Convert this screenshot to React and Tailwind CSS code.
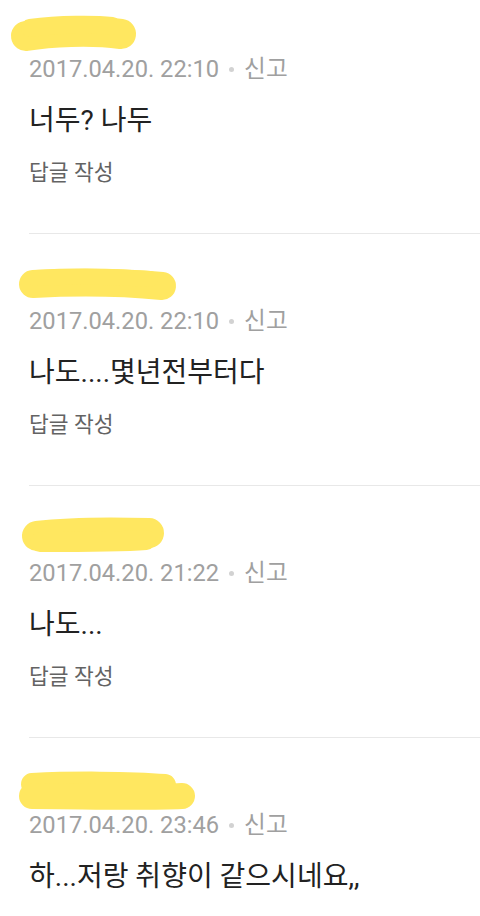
const comments = [
  {
    date: "2017.04.20. 22:10",
    body: "너두? 나두",
    reply: true,
    top: "pt-[4px]",
    marks: [
      { d: "M26 32 C50 28, 90 26, 121 30", w: 30 },
      { d: "M30 24 C60 20, 95 20, 112 22", w: 18 },
    ],
  },
  {
    date: "2017.04.20. 22:10",
    body: "나도....몇년전부터다",
    reply: true,
    top: "pt-[22px]",
    marks: [
      { d: "M33 28 C70 26, 120 26, 162 30", w: 28 },
      { d: "M36 22 C80 20, 120 21, 150 23", w: 16 },
    ],
  },
  {
    date: "2017.04.20. 21:22",
    body: "나도...",
    reply: true,
    top: "pt-[22px]",
    marks: [
      { d: "M37 28 C70 24, 115 24, 149 25", w: 30 },
      { d: "M40 34 C80 34, 120 34, 146 32", w: 20 },
    ],
  },
  {
    date: "2017.04.20. 23:46",
    body: "하...저랑 취향이 같으시네요,,",
    reply: false,
    top: "pt-[22px]",
    marks: [
      { d: "M32 24 C70 22, 130 22, 165 25", w: 22 },
      { d: "M32 36 C80 36, 140 38, 182 36", w: 26 },
    ],
  },
];

function Scribble({ marks }) {
  return (
    <svg width="480" height="50" viewBox="0 0 480 50" className="block -ml-[29px]">
      {marks.map((m, i) => (
        <path
          key={i}
          d={m.d}
          fill="none"
          stroke="#ffe760"
          strokeWidth={m.w}
          strokeLinecap="round"
        />
      ))}
    </svg>
  );
}

function Comment({ c, last }) {
  return (
    <div className={`${c.top} ${last ? "" : "border-b border-[#e8e8e8] pb-[46px]"}`}>
      <div className="h-[50px]">
        <Scribble marks={c.marks} />
      </div>
      <div className="flex items-center text-[23.7px] leading-[30px] text-[#a0a0a0]">
        <span>{c.date}</span>
        <span className="mx-[10px] h-[5px] w-[5px] rounded-full bg-[#d2d2d2]" />
        <span>신고</span>
      </div>
      <p className="mt-[20px] text-[28px] leading-[34px] text-[#222]">{c.body}</p>
      {c.reply && (
        <p className="mt-[21px] text-[21.5px] leading-[28px] text-[#636363]">답글 작성</p>
      )}
    </div>
  );
}

export default function App() {
  return (
    <div
      className="min-h-[916px] w-[480px] overflow-hidden bg-white pl-[29px]"
      style={{ fontFamily: "Roboto, 'Noto Sans CJK KR', sans-serif" }}
    >
      {comments.map((c, i) => (
        <Comment key={i} c={c} last={i === comments.length - 1} />
      ))}
    </div>
  );
}
